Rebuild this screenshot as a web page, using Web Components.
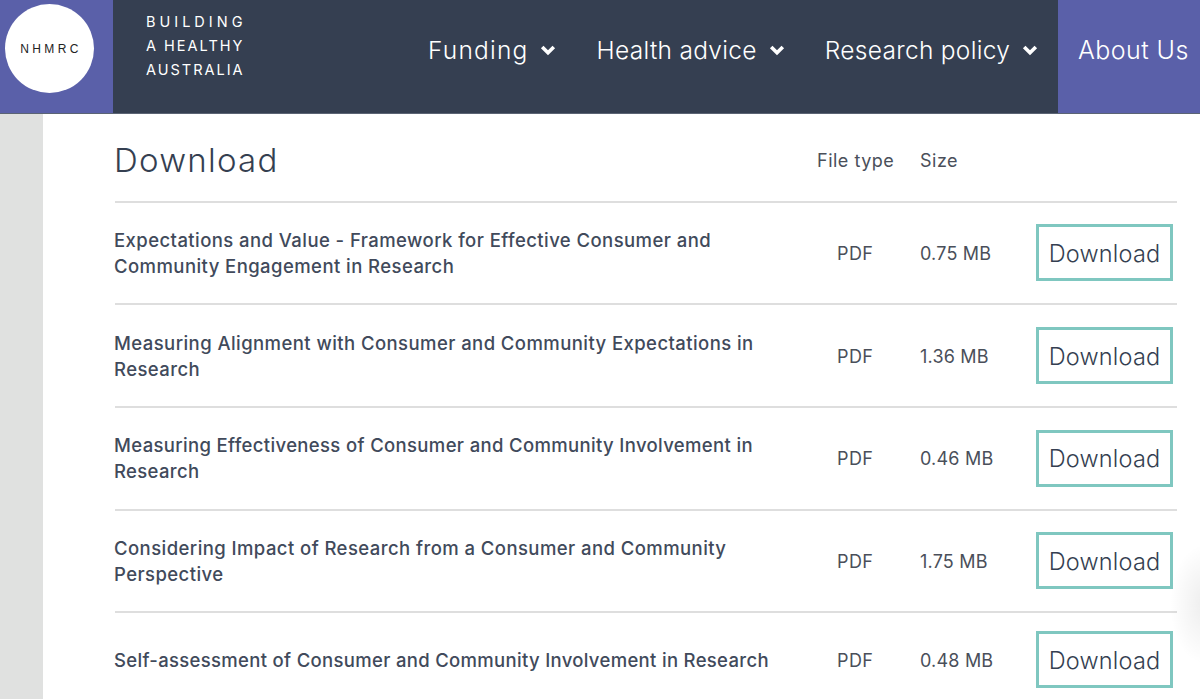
<!DOCTYPE html>
<html lang="en">
<head>
<meta charset="utf-8">
<title>NHMRC Download</title>
<style>
    html, body { margin: 0; height: 699px; overflow: hidden; background: #fff; }
    body { font-family: Inter, "Noto Sans", sans-serif; color: #353f51; }
</style>
</head>
<body>
<site-header></site-header>
<page-body>
    <download-row size="0.75 MB">Expectations and Value - Framework for Effective Consumer and<br>Community Engagement in Research</download-row>
    <download-row size="1.36 MB">Measuring Alignment with Consumer and Community Expectations in<br>Research</download-row>
    <download-row size="0.46 MB" style="--title-spacing: 0.35px">Measuring Effectiveness of Consumer and Community Involvement in<br>Research</download-row>
    <download-row size="1.75 MB">Considering Impact of Research from a Consumer and Community<br>Perspective</download-row>
    <download-row size="0.48 MB" style="--title-spacing: 0.32px">Self-assessment of Consumer and Community Involvement in Research</download-row>
</page-body>
<script>
class NavLink extends HTMLElement {
    constructor() {
        super();
        this.attachShadow({ mode: 'open' });
        this.shadowRoot.innerHTML = `
            <style>
                :host {
                    display: flex;
                    align-items: center;
                    gap: 12px;
                    color: #fff;
                    font-size: 24.5px;
                    font-weight: 300;
                    letter-spacing: 0.3px;
                    line-height: 36px;
                    white-space: nowrap;
                }
                svg { width: 16px; height: 12px; display: block; }
            </style>
            <slot></slot>
            <svg viewBox="0 0 16 12"><path d="M2.2 3 8 8.8 13.8 3" fill="none" stroke="#fff" stroke-width="3.6"/></svg>
        `;
    }
}

class SiteHeader extends HTMLElement {
    constructor() {
        super();
        this.attachShadow({ mode: 'open' });
        this.shadowRoot.innerHTML = `
            <style>
                :host {
                    display: flex;
                    height: 113px;
                    background: #353f51;
                    border-bottom: 1px solid #5b6474;
                }
                .logo {
                    width: 113px;
                    flex: none;
                    background: #5a60a9;
                    display: flex;
                    padding: 4px 0 0 5px;
                    box-sizing: border-box;
                }
                .circle {
                    width: 89px;
                    height: 89px;
                    border-radius: 50%;
                    background: #fff;
                    display: flex;
                    align-items: center;
                    justify-content: center;
                    color: #222;
                    font: 400 12px "Liberation Sans", sans-serif;
                    letter-spacing: 3.4px;
                    padding-left: 3px;
                    box-sizing: border-box;
                }
                .tag {
                    width: 202px;
                    flex: none;
                    padding: 10px 0 0 33px;
                    box-sizing: border-box;
                    color: #fff;
                    font-size: 14.5px;
                    line-height: 24px;
                }
                .tag div:nth-child(1) { letter-spacing: 4px; }
                .tag div:nth-child(2) { letter-spacing: 2px; }
                .tag div:nth-child(3) { letter-spacing: 2px; }
                nav {
                    flex: 1;
                    display: flex;
                    align-items: flex-start;
                    padding-top: 32px;
                    padding-left: 113px;
                    gap: 40px;
                    box-sizing: border-box;
                }
                .about {
                    width: 142px;
                    flex: none;
                    background: #5a60a9;
                    color: #fff;
                    font-size: 25px;
                    font-weight: 300;
                    letter-spacing: 0.45px;
                    line-height: 36px;
                    padding: 32px 0 0 20px;
                    box-sizing: border-box;
                    white-space: nowrap;
                }
            </style>
            <div class="logo"><div class="circle">NHMRC</div></div>
            <div class="tag"><div>BUILDING</div><div>A HEALTHY</div><div>AUSTRALIA</div></div>
            <nav>
                <nav-link style="letter-spacing: 1.2px">Funding</nav-link>
                <nav-link>Health advice</nav-link>
                <nav-link>Research policy</nav-link>
            </nav>
            <div class="about">About Us</div>
        `;
    }
}

class PageBody extends HTMLElement {
    constructor() {
        super();
        this.attachShadow({ mode: 'open' });
        this.shadowRoot.innerHTML = `
            <style>
                :host {
                    display: flex;
                    height: 585px;
                    overflow: hidden;
                    position: relative;
                }
                .side { width: 43px; flex: none; background: #e0e1e0; }
                .content { width: 1062px; margin-left: 72px; flex: none; }
                .head {
                    display: grid;
                    grid-template-columns: 702px 103px 1fr;
                    height: 86.5px;
                    border-bottom: 2px solid #dedede;
                }
                h2 {
                    margin: 0 0 0 -1px;
                    font-size: 33px;
                    font-weight: 300;
                    letter-spacing: 1.25px;
                    padding-top: 26px;
                    line-height: 40px;
                    color: #353f51;
                }
                .col {
                    font-size: 18px;
                    padding-top: 36px;
                    line-height: 22px;
                    letter-spacing: 0.5px;
                    color: #4a4f5a;
                }
                .shade {
                    position: absolute;
                    right: -40px;
                    top: 430px;
                    width: 70px;
                    height: 120px;
                    background: radial-gradient(closest-side, rgba(0,0,0,.07), rgba(0,0,0,0));
                }
            </style>
            <div class="side"></div>
            <div class="content">
                <div class="head">
                    <h2>Download</h2>
                    <div class="col">File type</div>
                    <div class="col">Size</div>
                </div>
                <slot></slot>
            </div>
            <div class="shade"></div>
        `;
    }
}

class DownloadRow extends HTMLElement {
    constructor() {
        super();
        this.attachShadow({ mode: 'open' });
        this.shadowRoot.innerHTML = `
            <style>
                :host {
                    display: grid;
                    grid-template-columns: 702px 103px 116px 137px 4px;
                    align-items: center;
                    height: 100.7px;
                    border-bottom: 2px solid #dedede;
                    color: #353f51;
                }
                :host(:last-child) { border-bottom: 0; height: 93px; }
                .title {
                    font-size: 18.5px;
                    font-weight: 500;
                    line-height: 26px;
                    white-space: nowrap;
                    letter-spacing: var(--title-spacing, 0.43px);
                    margin-left: -1px;
                    color: #414a5b;
                }
                .type { padding: 1px 0 0 20px; color: #4a4f5a; font-size: 18px; letter-spacing: 0.4px; }
                .size { padding-top: 1px; color: #4a4f5a; font-size: 18px; letter-spacing: 0.2px; }
                .btn {
                    height: 57px;
                    box-sizing: border-box;
                    border: 3px solid #7fc7c0;
                    padding-top: 1px;
                    display: flex;
                    align-items: center;
                    justify-content: center;
                    font-size: 23.5px;
                    font-weight: 300;
                    letter-spacing: 0.2px;
                    color: #353f51;
                }
            </style>
            <div class="title"><slot></slot></div>
            <div class="type">PDF</div>
            <div class="size"></div>
            <div class="btn">Download</div>
        `;
    }

    connectedCallback() {
        this.shadowRoot.querySelector('.size').textContent = this.getAttribute('size');
    }
}

customElements.define('nav-link', NavLink);
customElements.define('site-header', SiteHeader);
customElements.define('page-body', PageBody);
customElements.define('download-row', DownloadRow);
</script>
</body>
</html>
